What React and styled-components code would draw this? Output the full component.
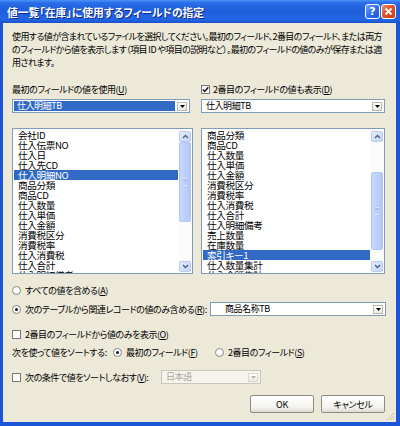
import styled, { createGlobalStyle } from "styled-components";
import React from "react";

const GlobalStyle = createGlobalStyle`
  html, body {
    margin: 0;
    padding: 0;
    background: #ffffff;
  }
  body {
    font-family: "Noto Sans CJK JP", "DejaVu Sans", sans-serif;
    font-feature-settings: "palt";
  }
`;

const Window = styled.div`
  width: 400px;
  height: 426px;
  display: flex;
  flex-direction: column;
  background: #1c54d8;
  box-sizing: border-box;
`;

const TitleBar = styled.div`
  height: 23px;
  flex: none;
  display: flex;
  align-items: center;
  padding: 0 4px 0 7px;
  background: linear-gradient(
    180deg,
    #4a93f8 0%,
    #2a6ee8 12%,
    #1f5edc 45%,
    #2366e4 85%,
    #1a4fcb 100%
  );
`;

const Title = styled.div`
  flex: 1;
  color: #ffffff;
  font-size: 10.8px;
  font-weight: bold;
  text-shadow: 1px 1px 0 #0c2a8a;
  white-space: nowrap;
`;

const CaptionButton = styled.div`
  width: 15px;
  height: 15px;
  box-sizing: border-box;
  border: 1px solid #ffffff;
  border-radius: 3px;
  display: flex;
  align-items: center;
  justify-content: center;
  margin-left: 1px;
  color: #ffffff;
  font-family: "DejaVu Sans", sans-serif;
  font-weight: bold;
  font-size: 11px;
  background: ${(props) =>
    props.close
      ? "linear-gradient(135deg, #f08a66 0%, #e2522c 45%, #c93c17 100%)"
      : "linear-gradient(135deg, #6fa6ff 0%, #2f6ff0 50%, #1e56d6 100%)"};
`;

const Body = styled.div`
  flex: 1;
  margin: 0 4px 4px 3px;
  background: #ece9d8;
  padding: 7px 10px 0 9px;
  display: flex;
  flex-direction: column;
  font-size: 9px;
  letter-spacing: -0.45px;
  color: #000000;
  position: relative;
`;

const Desc = styled.div`
  line-height: 13px;
  white-space: nowrap;
  letter-spacing: -0.6px;
`;

const Columns = styled.div`
  display: grid;
  grid-template-columns: 181px 184px;
  column-gap: 8px;
  margin-top: 14px;
`;

const Column = styled.div`
  display: flex;
  flex-direction: column;
`;

const FieldLabel = styled.div`
  height: 13px;
  line-height: 13px;
  display: flex;
  align-items: center;
  white-space: nowrap;
`;

const Combo = styled.div`
  height: 14px;
  box-sizing: border-box;
  flex: none;
  border: 1px solid ${(props) => (props.disabled ? "#c9c7ba" : "#7f9db9")};
  background: ${(props) => (props.disabled ? "#f5f4ee" : "#ffffff")};
  display: flex;
  align-items: center;
  padding: 1px;
  width: ${(props) => props.width || "auto"};
  margin-top: ${(props) => props.top || "0"};
  margin-left: ${(props) => props.left || "0"};
  color: ${(props) => (props.disabled ? "#aca899" : "#000000")};
`;

const ComboText = styled.div`
  flex: 1;
  height: 10px;
  line-height: 10px;
  padding-left: ${(props) => props.indent || "3px"};
  margin-right: 2px;
  background: ${(props) => (props.selected ? "#316ac5" : "transparent")};
  color: ${(props) => (props.selected ? "#ffffff" : "inherit")};
  white-space: nowrap;
`;

const DropButton = styled.div`
  width: 10px;
  height: 9px;
  box-sizing: border-box;
  border: 1px solid ${(props) => (props.disabled ? "#d8d6cc" : "#b8b8b0")};
  background: linear-gradient(180deg, #ffffff 0%, #ebeae3 100%);
  display: flex;
  align-items: center;
  justify-content: center;
  margin-right: 1px;
`;

const ListBox = styled.div`
  height: 146px;
  box-sizing: border-box;
  border: 1px solid #7f9db9;
  background: #ffffff;
  display: flex;
  margin-top: 15px;
`;

const Items = styled.div`
  flex: 1;
  overflow: hidden;
  padding: 1px 0 0 1px;
  font-size: 9.6px;
  letter-spacing: -0.35px;
`;

const Item = styled.div`
  height: 10px;
  line-height: 10px;
  padding-left: 4px;
  white-space: nowrap;
  background: ${(props) => (props.selected ? "#316ac5" : "transparent")};
  color: ${(props) => (props.selected ? "#ffffff" : "#000000")};
`;

const ScrollBar = styled.div`
  width: 12px;
  flex: none;
  display: flex;
  flex-direction: column;
  padding: 2px 1px 1px 1px;
  background: #fcfcfa;
`;

const ScrollButton = styled.div`
  height: 11px;
  flex: none;
  box-sizing: border-box;
  border: 1px solid #b9cbf3;
  border-radius: 2px;
  background: linear-gradient(135deg, #e4ecfd 0%, #c3d4f9 100%);
  display: flex;
  align-items: center;
  justify-content: center;
`;

const Track = styled.div`
  flex: 1;
  display: flex;
  flex-direction: column;
`;

const Thumb = styled.div`
  box-sizing: border-box;
  border: 1px solid #b4c8f5;
  border-radius: 2px;
  background: linear-gradient(90deg, #c8d8fb 0%, #bccffa 60%, #b2c7f7 100%);
  display: flex;
  align-items: center;
  justify-content: center;
`;

const Grip = styled.div`
  width: 4px;
  height: 6px;
  border-top: 1px solid #e8eefd;
  border-bottom: 1px solid #e8eefd;
  box-shadow: inset 0 2px 0 #a5bcf0;
  opacity: 0.8;
`;

const Row = styled.div`
  height: 14px;
  display: flex;
  align-items: center;
  white-space: nowrap;
  margin-top: ${(props) => props.top || "0"};
`;

const Label = styled.span`
  flex: none;
  width: ${(props) => props.width || "auto"};
`;

const Radio = styled.span`
  width: 9px;
  height: 9px;
  box-sizing: border-box;
  flex: none;
  border-radius: 50%;
  border: 1px solid #8a8a8a;
  background: radial-gradient(circle at 40% 40%, #ffffff 0%, #ffffff 45%, #e4e2da 100%);
  display: inline-flex;
  align-items: center;
  justify-content: center;
  margin-right: 4px;
  &::after {
    content: "";
    width: 3px;
    height: 3px;
    border-radius: 50%;
    background: ${(props) => (props.checked ? "#1a1a1a" : "transparent")};
  }
`;

const CheckBox = styled.span`
  width: 9px;
  height: 9px;
  box-sizing: border-box;
  flex: none;
  border: 1px solid #7b7b7b;
  background: linear-gradient(135deg, #f6f6f3 0%, #ffffff 100%);
  display: inline-flex;
  align-items: center;
  justify-content: center;
  margin-right: ${(props) => props.gap || "4px"};
`;

const U = styled.span`
  text-decoration: underline;
  text-underline-offset: 1px;
`;

const ButtonRow = styled.div`
  display: flex;
  justify-content: flex-end;
  gap: 7px;
  margin-top: 11px;
  padding-right: 1px;
`;

const Button = styled.button`
  width: 64px;
  height: 18px;
  box-sizing: border-box;
  border: 1px solid #8c8c84;
  border-radius: 2px;
  background: linear-gradient(180deg, #ffffff 0%, #f4f3ee 70%, #dedcd2 100%);
  font-family: inherit;
  font-feature-settings: "palt";
  font-size: 9px;
  letter-spacing: -0.3px;
  color: #000000;
  padding: 0;
`;

const ResizeGrip = styled.svg`
  position: absolute;
  right: 1px;
  bottom: 1px;
`;

function Arrow({ up, color = "#4d6185" }) {
  return (
    <svg width="7" height="5" viewBox="0 0 7 5">
      <path
        d={up ? "M1 4 L3.5 1.5 L6 4" : "M1 1 L3.5 3.5 L6 1"}
        fill="none"
        stroke={color}
        strokeWidth="1.4"
      />
    </svg>
  );
}

function DropArrow({ disabled }) {
  return (
    <svg width="5" height="3" viewBox="0 0 5 3">
      <path d="M0 0 H5 L2.5 3 Z" fill={disabled ? "#b8b6aa" : "#000000"} />
    </svg>
  );
}

function ListField({ items, selected, thumbTop, thumbHeight }) {
  return (
    <ListBox>
      <Items>
        {items.map((item) => (
          <Item key={item} selected={item === selected}>
            {item}
          </Item>
        ))}
      </Items>
      <ScrollBar>
        <ScrollButton>
          <Arrow up />
        </ScrollButton>
        <Track>
          <Thumb style={{ marginTop: thumbTop, height: thumbHeight }}>
            <Grip />
          </Thumb>
        </Track>
        <ScrollButton>
          <Arrow />
        </ScrollButton>
      </ScrollBar>
    </ListBox>
  );
}

const leftItems = [
  "会社ID",
  "仕入伝票NO",
  "仕入日",
  "仕入先CD",
  "仕入明細NO",
  "商品分類",
  "商品CD",
  "仕入数量",
  "仕入単価",
  "仕入金額",
  "消費税区分",
  "消費税率",
  "仕入消費税",
  "仕入合計",
  "仕入明細備考",
];

const rightItems = [
  "商品分類",
  "商品CD",
  "仕入数量",
  "仕入単価",
  "仕入金額",
  "消費税区分",
  "消費税率",
  "仕入消費税",
  "仕入合計",
  "仕入明細備考",
  "売上数量",
  "在庫数量",
  "索引キー1",
  "仕入数量集計",
  "仕入金額集計",
];

function App() {
  return (
    <>
      <GlobalStyle />
      <Window>
        <TitleBar>
          <Title>値一覧「在庫」に使用するフィールドの指定</Title>
          <CaptionButton>?</CaptionButton>
          <CaptionButton close>
            <svg width="9" height="9" viewBox="0 0 9 9">
              <path
                d="M1.5 1.5 L7.5 7.5 M7.5 1.5 L1.5 7.5"
                stroke="#ffffff"
                strokeWidth="1.8"
              />
            </svg>
          </CaptionButton>
        </TitleBar>
        <Body>
          <Desc>
            使用する値が含まれているファイルを選択してください。最初のフィールド、2番目のフィールド、または両方
            <br />
            のフィールドから値を表示します（項目 ID や項目の説明など）。最初のフィールドの値のみが保存または適
            <br />
            用されます。
          </Desc>

          <Columns>
            <Column>
              <FieldLabel>
                <Label>
                  最初のフィールドの値を使用(<U>U</U>)
                </Label>
              </FieldLabel>
              <Combo top="3px" width="178px">
                <ComboText selected>仕入明細TB</ComboText>
                <DropButton>
                  <DropArrow />
                </DropButton>
              </Combo>
              <ListField
                items={leftItems}
                selected="仕入明細NO"
                thumbTop={0}
                thumbHeight={80}
              />
            </Column>
            <Column>
              <FieldLabel>
                <CheckBox gap="3px">
                  <svg width="7" height="7" viewBox="0 0 7 7">
                    <path
                      d="M0.8 3.4 L2.7 5.4 L6.3 1.2"
                      fill="none"
                      stroke="#1b1b1b"
                      strokeWidth="1.5"
                    />
                  </svg>
                </CheckBox>
                <Label>
                  2番目のフィールドの値も表示(<U>D</U>)
                </Label>
              </FieldLabel>
              <Combo top="3px">
                <ComboText>仕入明細TB</ComboText>
                <DropButton>
                  <DropArrow />
                </DropButton>
              </Combo>
              <ListField
                items={rightItems}
                selected="索引キー1"
                thumbTop={30}
                thumbHeight={78}
              />
            </Column>
          </Columns>

          <Row top="9px">
            <Radio />
            <Label>
              すべての値を含める(<U>A</U>)
            </Label>
          </Row>
          <Row top="5px">
            <Radio checked />
            <Label>
              次のテーブルから関連レコードの値のみ含める(<U>R</U>):
            </Label>
            <Combo width="176px" left="auto">
              <ComboText indent="13px">商品名称TB</ComboText>
              <DropButton>
                <DropArrow />
              </DropButton>
            </Combo>
          </Row>
          <Row top="11px">
            <CheckBox />
            <Label>
              2番目のフィールドから値のみを表示(<U>O</U>)
            </Label>
          </Row>
          <Row top="4px">
            <Label width="101px">次を使って値をソートする:</Label>
            <Radio checked />
            <Label width="89px">
              最初のフィールド(<U>F</U>)
            </Label>
            <Radio />
            <Label>
              2番目のフィールド(<U>S</U>)
            </Label>
          </Row>
          <Row top="11px">
            <CheckBox />
            <Label width="136px">
              次の条件で値をソートしなおす(<U>V</U>):
            </Label>
            <Combo width="100px" disabled>
              <ComboText>日本語</ComboText>
              <DropButton disabled>
                <DropArrow disabled />
              </DropButton>
            </Combo>
          </Row>

          <ButtonRow>
            <Button>OK</Button>
            <Button>キャンセル</Button>
          </ButtonRow>

          <ResizeGrip width="10" height="10" viewBox="0 0 10 10">
            <path
              d="M9 2 L2 9 M9 5 L5 9 M9 8 L8 9"
              stroke="#c2bfae"
              strokeWidth="1"
            />
          </ResizeGrip>
        </Body>
      </Window>
    </>
  );
}

export default App;
